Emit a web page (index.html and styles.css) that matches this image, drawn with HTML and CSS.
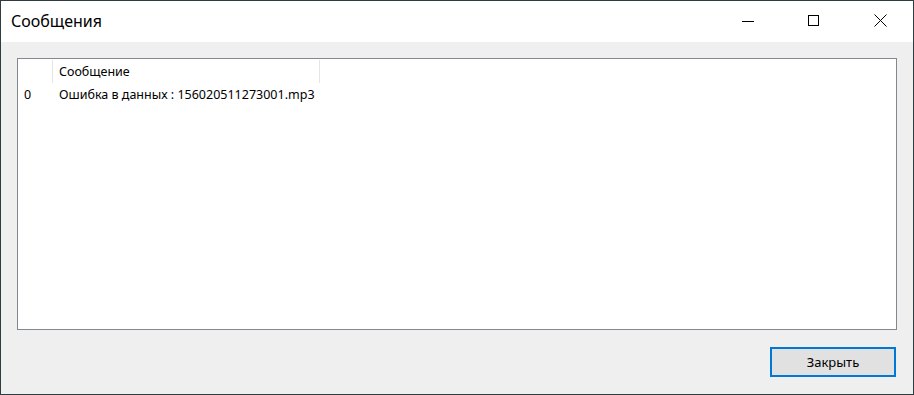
FILE: index.html
```html
<!DOCTYPE html>
<html lang="ru">
<head>
    <meta charset="UTF-8">
    <title>Сообщения</title>
    <link rel="stylesheet" href="styles.css">
</head>
<body>
    <div class="window">
        <div class="title-bar">
            <span class="title">Сообщения</span>
            <div class="title-buttons">
                <button class="title-btn" title="Свернуть">
                    <svg width="12" height="12" viewBox="0 0 12 12"><path d="M0 6.5h12" stroke="#000" stroke-width="1"/></svg>
                </button>
                <button class="title-btn" title="Развернуть">
                    <svg width="12" height="12" viewBox="0 0 12 12"><rect x="0.5" y="0.5" width="10" height="10" fill="none" stroke="#000" stroke-width="1"/></svg>
                </button>
                <button class="title-btn" title="Закрыть">
                    <svg width="13" height="13" viewBox="0 0 13 13"><path d="M0.5 0.5L12.5 12.5M12.5 0.5L0.5 12.5" stroke="#000" stroke-width="1"/></svg>
                </button>
            </div>
        </div>

        <div class="content">
            <div class="list-view">
                <div class="list-header">
                    <div class="col-index"></div>
                    <div class="col-message">Сообщение</div>
                </div>
                <div class="list-row">
                    <div class="col-index">0</div>
                    <div class="col-message">Ошибка в данных : 156020511273001.mp3</div>
                </div>
            </div>
            <div class="actions">
                <button class="btn-close">Закрыть</button>
            </div>
        </div>
    </div>
</body>
</html>
```

FILE: styles.css
```css
body {
    margin: 0;
    padding: 0;
    font-family: "Noto Sans", "Open Sans", sans-serif;
    font-size: 12.5px;
    color: #000;
}

.window {
    width: 914px;
    height: 395px;
    box-sizing: border-box;
    border: 1px solid #2e3d40;
    display: flex;
    flex-direction: column;
    background-color: #efefef;
}

.title-bar {
    height: 41px;
    background-color: #fff;
    display: flex;
    align-items: center;
    justify-content: space-between;
}

.title {
    padding-left: 10px;
    font-size: 16px;
    margin-top: -1px;
}

.title-buttons {
    display: flex;
    height: 100%;
}

.title-btn {
    width: 66px;
    height: 100%;
    border: none;
    background: transparent;
    padding: 0 0 2px 0;
    display: flex;
    align-items: center;
    justify-content: center;
}

.content {
    flex: 1;
    display: flex;
    flex-direction: column;
    padding: 16px 16px 17px 16px;
}

.list-view {
    height: 272px;
    box-sizing: border-box;
    border: 1px solid #828790;
    background-color: #fff;
}

.list-header {
    display: flex;
    height: 24px;
    align-items: center;
}

.list-header .col-index,
.list-header .col-message {
    height: 23px;
    border-right: 1px solid #e5e5e5;
    display: flex;
    align-items: center;
}

.col-index {
    width: 35px;
    padding-left: 6px;
    box-sizing: border-box;
}

.col-message {
    width: 267px;
    padding-left: 6px;
    box-sizing: border-box;
    white-space: nowrap;
}

.list-row {
    display: flex;
    height: 22px;
    align-items: center;
}

.actions {
    display: flex;
    justify-content: flex-end;
    margin-top: 17px;
}

.btn-close {
    width: 126px;
    height: 30px;
    border: 2px solid #0078d7;
    background-color: #e1e1e1;
    font-family: "Noto Sans", "Open Sans", sans-serif;
    font-size: 13px;
    color: #000;
    margin-right: 1px;
    padding: 0;
}
```
